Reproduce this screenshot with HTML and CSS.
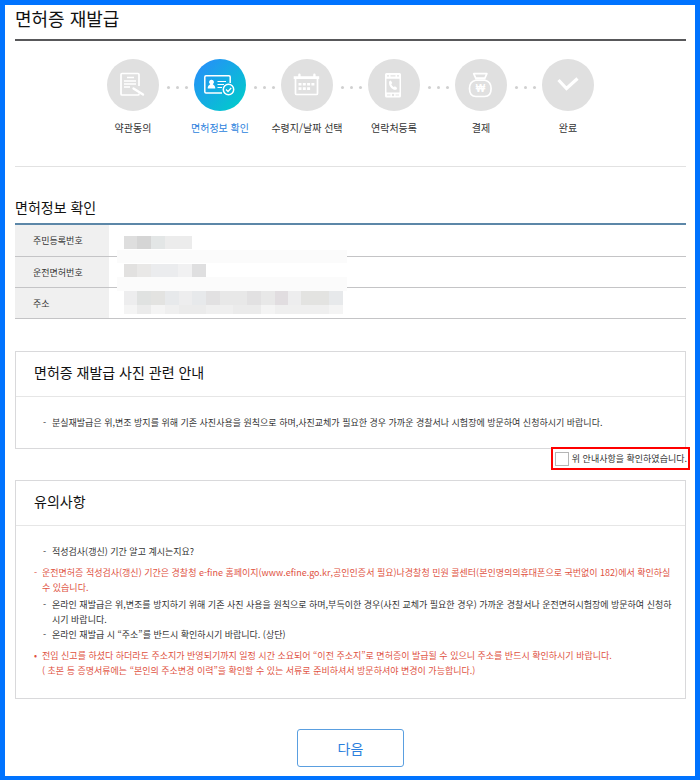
FILE: index.html
```html
<!DOCTYPE html>
<html lang="ko">
<head>
<meta charset="utf-8">
<meta name="viewport" content="width=device-width, initial-scale=1">
<title>면허증 재발급</title>
<link rel="stylesheet" href="styles.css">
</head>
<body>
<main class="page">
  <h1 class="page-title">면허증 재발급</h1>

  <ol class="steps">
    <li class="step">
      <svg class="step-icon" viewBox="0 0 52 52" aria-hidden="true">
        <g fill="none" stroke="#fff" stroke-width="1.7">
          <path d="M32 27V15.500a1 1 0 0 0-1-1H15a1 1 0 0 0-1 1V35a1 1 0 0 0 1 1h16a1 1 0 0 0 1-1v-.5"/>
          <path d="M20 18.500h7M17 22h12M17 25h12M17 28h6"/>
          <path d="M26.500 29.500l9.500 6" stroke-width="2.400" stroke-linecap="round"/>
        </g>
      </svg>
      <span class="step-label">약관동의</span>
    </li>
    <li class="step step-current" aria-current="step">
      <svg class="step-icon" viewBox="0 0 52 52" aria-hidden="true">
        <g fill="none" stroke="#fff" stroke-width="1.500">
          <path d="M28 34H12a1.200 1.200 0 0 1-1.200-1.200V18a1.200 1.200 0 0 1 1.200-1.200h23A1.200 1.200 0 0 1 36.200 18v6"/>
          <path d="M23.500 22.500h8.500M23.500 25.500h6.500M23.500 28.500h4.500" stroke-width="1.200"/>
          <circle cx="34.500" cy="30.500" r="5.200"/>
          <path d="M32 30.500l2 2 3.200-3.500" stroke-width="1.300"/>
        </g>
        <path fill="#fff" d="M17.500 20.800a2.300 2.300 0 0 1 1.300 4.300c0 .8 2.500 1.200 2.500 4.400h-7.600c0-3.200 2.500-3.600 2.500-4.400a2.300 2.300 0 0 1 1.300-4.300z"/>
      </svg>
      <span class="step-label">면허정보 확인</span>
    </li>
    <li class="step">
      <svg class="step-icon" viewBox="0 0 52 52" aria-hidden="true">
        <path fill="none" stroke="#fff" stroke-width="1.700" d="M14.500 19v15.500a1 1 0 0 0 1 1h20a1 1 0 0 0 1-1V19"/>
        <path fill="#fff" d="M12.700 17.300h4.500v-1.500a1.200 1.200 0 0 1 2.400 0v1.500h12.600v-1.500a1.200 1.200 0 0 1 2.400 0v1.500h3.600v2.800H12.700z"/>
        <path fill="none" stroke="#fff" stroke-width="2.600" d="M17.500 25.300h16M17.500 29.600h12" stroke-dasharray="3 1.300"/>
      </svg>
      <span class="step-label">수령지/날짜 선택</span>
    </li>
    <li class="step">
      <svg class="step-icon" viewBox="0 0 52 52" aria-hidden="true">
        <path fill="#fff" fill-rule="evenodd" d="M18.500 14h13a1.500 1.500 0 0 1 1.500 1.500V37a1.500 1.500 0 0 1-1.500 1.500h-13A1.500 1.500 0 0 1 17 37V15.500a1.500 1.500 0 0 1 1.500-1.500zM18.500 19.800v13.600h13V19.800zM19 16.300v1.200h2v-1.200zM22.500 16.300v1.200h5v-1.200zM29 16.300v1.200h2v-1.200zM19 35.500v1h3.500v-1zM27.500 35.500v1H31v-1zM25 34.800a1.200 1.200 0 1 0 .01 0z"/>
        <path fill="#fff" d="M21.300 22.200l1.500-.7 1.500 2.600-1 1.100c.4 1.200 1.300 2.100 2.500 2.800l1.200-.7 2.200 1.800-.9 1.600c-3.500 1.100-8.500-4-7-8.500z"/>
      </svg>
      <span class="step-label">연락처등록</span>
    </li>
    <li class="step">
      <svg class="step-icon" viewBox="0 0 52 52" aria-hidden="true">
        <g fill="none" stroke="#fff" stroke-width="1.700" stroke-linejoin="round">
          <path d="M18.700 14.700h13.200l-2 4.500h-9.200z"/>
          <path d="M20.500 21.200h9.600c4 1 6 3.800 6 8.300 0 5-2.500 8-6.500 8h-8.600c-4 0-6.500-3-6.500-8 0-4.500 2-7.300 6-8.300z"/>
        </g>
        <text class="step-won" x="25.500" y="33" text-anchor="middle">₩</text>
      </svg>
      <span class="step-label">결제</span>
    </li>
    <li class="step">
      <svg class="step-icon" viewBox="0 0 52 52" aria-hidden="true">
        <path fill="none" stroke="#fff" stroke-width="3.200" d="M16.500 21l8 8.500L35.500 19.500"/>
      </svg>
      <span class="step-label">완료</span>
    </li>
  </ol>

  <section class="license">
    <h2 class="section-title">면허정보 확인</h2>
    <div class="license-body">
      <table class="license-table">
        <tbody>
          <tr><th scope="row">주민등록번호</th><td></td></tr>
          <tr><th scope="row">운전면허번호</th><td></td></tr>
          <tr><th scope="row">주소</th><td></td></tr>
        </tbody>
      </table>
      <svg class="mosaic" viewBox="0 0 230 78" aria-hidden="true" shape-rendering="crispEdges">
        <path fill="#fbfbfb" d="M0 14h230v13H0zM0 41h230v14H0z"/>
        <path fill="#dedede" d="M7 0h13v13H7z"/>
        <path fill="#d5d5d5" d="M20 0h14v13H20z"/>
        <path fill="#e3e6e6" d="M34 0h14v13H34z"/>
        <path fill="#ececec" d="M48 0h27v13H48z"/>
        <path fill="#e2e1e0" d="M7 28h13v13H7z"/>
        <path fill="#e9e8e7" d="M20 28h14v13H20z"/>
        <path fill="#ebecee" d="M34 28h27v13H34z"/>
        <path fill="#f1f1f2" d="M61 28h14v13H61z"/>
        <path fill="#dfdfe0" d="M75 28h14v13H75z"/>
        <path fill="#ededee" d="M7 55h219v14H7z"/>
        <path fill="#e0e2e1" d="M20 55h14v14H20z"/>
        <path fill="#e3e3e1" d="M34 55h14v14H34zM184 55h28v14h-28z"/>
        <path fill="#e7e9eb" d="M48 55h14v14H48zM75 55h14v14H75zM212 55h14v14h-14z"/>
        <path fill="#e2e1e2" d="M89 55h14v14H89zM130 55h14v14h-14z"/>
        <path fill="#e8e8e8" d="M103 55h27v14h-27zM144 55h14v14h-14z"/>
        <path fill="#e1dde0" d="M158 55h13v14h-13z"/>
        <path fill="#f4f4f4" d="M7 69h219v9H7z"/>
        <path fill="#ebebeb" d="M20 69h14v9H20zM62 69h27v9H62zM116 69h28v9h-28z"/>
        <path fill="#efefef" d="M48 69h14v9H48zM89 69h27v9H89zM158 69h54v9h-54z"/>
      </svg>
    </div>
  </section>

  <section class="notice">
    <h2 class="notice-title">면허증 재발급 사진 관련 안내</h2>
    <ul class="notice-list">
      <li class="dash">분실재발급은 위,변조 방지를 위해 기존 사진사용을 원칙으로 하며,사진교체가 필요한 경우 가까운 경찰서나 시험장에 방문하여 신청하시기 바랍니다.</li>
    </ul>
  </section>

  <label class="confirm" for="agree">
    <input class="confirm-box" type="checkbox" id="agree">
    <span>위 안내사항을 확인하였습니다.</span>
  </label>

  <section class="notice notice-caution">
    <h2 class="notice-title">유의사항</h2>
    <ul class="notice-list">
      <li class="dash">적성검사(갱신) 기간 알고 계시는지요?</li>
      <li class="alert alert-dash">운전면허증 적성검사(갱신) 기간은 경찰청 e-fine 홈페이지(www.efine.go.kr,공인인증서 필요)나경찰청 민원 콜센터(본인명의의휴대폰으로 국번없이 182)에서 확인하실 수 있습니다.</li>
      <li class="dash">온라인 재발급은 위,변조를 방지하기 위해 기존 사진 사용을 원칙으로 하며,부득이한 경우(사진 교체가 필요한 경우) 가까운 경찰서나 운전면허시험장에 방문하여 신청하시기 바랍니다.</li>
      <li class="dash">온라인 재발급 시 “주소”를 반드시 확인하시기 바랍니다. (상단)</li>
      <li class="alert alert-dot">전입 신고를 하셨다 하더라도 주소지가 반영되기까지 일정 시간 소요되어 “이전 주소지”로 면허증이 발급될 수 있으니 주소를 반드시 확인하시기 바랍니다.<br>( 초본 등 증명서류에는 “본인의 주소변경 이력”을 확인할 수 있는 서류로 준비하셔서 방문하셔야 변경이 가능합니다.)</li>
    </ul>
  </section>

  <div class="actions">
    <button class="next" type="button">다음</button>
  </div>
</main>
</body>
</html>
```
FILE: styles.css
```css
* {
  box-sizing: border-box;
}

body {
  margin: 0;
  background: #fff;
  color: #333;
  font-family: "Noto Sans CJK KR", sans-serif;
  font-size: 9px;
  line-height: 15px;
}

.page {
  min-height: 100vh;
  padding: 0 9px 9px 10px;
  border: 5px solid #0073ff;
}

h1,
h2,
ol,
ul {
  margin: 0;
  padding: 0;
  font-weight: 400;
  list-style: none;
}

.page-title {
  padding: 0 0 8px;
  border-bottom: 2px solid #58585a;
  color: #111;
  font-size: 18px;
  line-height: 26px;
}

/* Progress steps */
.steps {
  display: flex;
  justify-content: center;
  padding: 18px 0 28px;
  border-bottom: 1px solid #e2e2e2;
}

.step {
  position: relative;
  display: flex;
  flex: 0 1 87px;
  flex-direction: column;
  align-items: center;
  gap: 7px;
}

.step:not(:last-child)::after {
  content: "";
  position: absolute;
  top: 27px;
  right: -2px;
  width: 3px;
  height: 3px;
  border-radius: 50%;
  background: #d0d0d0;
  box-shadow: -9px 0 #d0d0d0, 9px 0 #d0d0d0;
}

.step-icon {
  width: 52px;
  height: 52px;
  border-radius: 50%;
  background: #e0e0e0;
}

.step-current .step-icon {
  background: linear-gradient(135deg, #2394f5 15%, #04c6cf 85%);
}

.step-won {
  fill: #fff;
  font-family: "Liberation Sans", sans-serif;
  font-size: 10px;
  font-weight: 700;
}

.step-label {
  font-size: 10px;
  line-height: 20px;
  white-space: nowrap;
}

.step-current .step-label {
  color: #2b7fdd;
}

/* License details */
.section-title {
  padding: 28px 0 4px;
  color: #111;
  font-size: 14px;
  line-height: 24px;
}

.license-body {
  position: relative;
}

.license-table {
  width: 100%;
  border-top: 2px solid #5c87a8;
  border-spacing: 0;
}

.license-table th,
.license-table td {
  padding: 8px 18px;
  border-bottom: 1px solid #c4c4c6;
}

.license-table th {
  width: 94px;
  background: #f0f0f0;
  font-weight: 400;
  text-align: left;
  white-space: nowrap;
}

.license-table tr:not(:first-child) th {
  padding-bottom: 7px;
}

.mosaic {
  position: absolute;
  top: 13px;
  left: 102px;
  width: 230px;
  height: 78px;
}

/* Notices */
.notice {
  margin-top: 32px;
  border: 1px solid #d9d9db;
}

.notice-title {
  padding: 8px 18px 12px;
  border-bottom: 1px solid #e6e6e6;
  color: #111;
  font-size: 14px;
  line-height: 24px;
}

.notice-list {
  padding: 18px 10px 18px 18px;
}

.notice-list li {
  position: relative;
  padding-left: 18px;
}

.notice-list li::before {
  content: "-";
  position: absolute;
  left: 9px;
}

.notice-list .alert {
  margin: 6px 0 2px;
  padding-left: 8px;
  color: #e0523f;
}

.notice-list .alert::before {
  left: 0;
}

.notice-list .alert-dot::before {
  content: "•";
}

.confirm {
  display: flex;
  align-items: center;
  gap: 3px;
  width: fit-content;
  margin: -2px -4px 0 auto;
  padding: 1px 1px 2px 2px;
  border: 2px solid #f00;
  background: #fff;
  position: relative;
}

.confirm-box {
  appearance: none;
  width: 14px;
  height: 14px;
  margin: 2px 0 0;
  border: 1px solid #b5b5b5;
  background: #fff;
}

.confirm-box:checked {
  background: #2b7fdd;
}

.notice-caution {
  margin-top: 10px;
}

/* Actions */
.actions {
  display: flex;
  justify-content: center;
  padding-top: 30px;
}

.next {
  width: 107px;
  height: 38px;
  padding: 0;
  border: 1px solid #5a9fe0;
  border-radius: 3px;
  background: #fff;
  color: #2b7fdd;
  font: 14px/24px "Noto Sans CJK KR", sans-serif;
}
```
